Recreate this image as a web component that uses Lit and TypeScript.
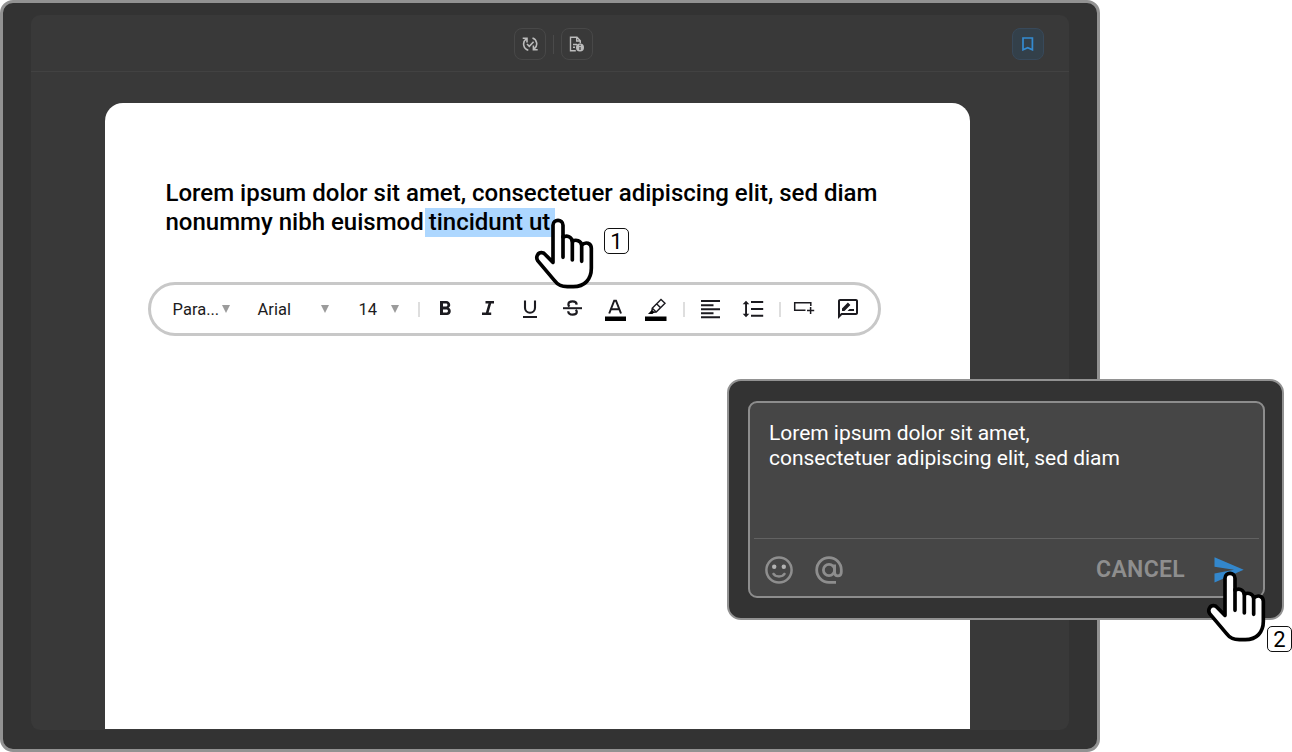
import { LitElement, html, css, svg } from "lit";
import { customElement, property } from "lit/decorators.js";

@customElement("pointer-hand")
class PointerHand extends LitElement {
  static styles = css`
    :host { display: block; width: 62px; height: 72px; }
    svg { display: block; overflow: visible; }
  `;
  render() {
    return html`<svg width="62" height="72" viewBox="42 54 186 216" fill="#fff" stroke="#000" stroke-width="11" stroke-linecap="round" stroke-linejoin="round">
      <path d="M99 187V76C99 56 129 56 129 76V112C140 104 155 110 157 124C168 117 183 122 185 135C197 124 214 129 214 145V205C214 238 194 260 160 260H142C122 260 113 254 103 241L53 182C46 170 54 157 66 158C70 158 74 161 77 165Z"/>
      <path d="M129 110V172M157 122V180M185 133V184" fill="none"/>
    </svg>`;
  }
}

@customElement("step-badge")
class StepBadge extends LitElement {
  @property() label = "";
  static styles = css`
    :host { display: block; }
    .box { box-sizing: border-box; width: 25px; height: 26px; border: 1.4px solid #111; border-radius: 5px; background: #fff; color: #000;
      font: 400 22px/25px Roboto, sans-serif; text-align: center; }
  `;
  render() { return html`<div class="box">${this.label}</div>`; }
}

const glyphs = {
  bold: svg`<path d="M15.6 10.79c.97-.67 1.65-1.77 1.65-2.79 0-2.26-1.75-4-4-4H7v14h7.04c2.09 0 3.71-1.7 3.71-3.79 0-1.52-.86-2.82-2.15-3.42zM10 6.5h3c.83 0 1.5.67 1.5 1.5s-.67 1.5-1.5 1.5h-3v-3zm3.5 9H10v-3h3.5c.83 0 1.5.67 1.5 1.5s-.67 1.5-1.5 1.5z"/>`,
  italic: svg`<path d="M9.5 4v2.4h3L9.9 15.6H6V18h9.2v-2.4h-2.6l2.6-9.2H18V4z"/>`,
  underline: svg`<path d="M7 3.500v7.300a5 5 0 0 0 10 0V3.500" fill="none" stroke="currentColor" stroke-width="2.100"/><path d="M5 19h14v2H5z"/>`,
  strike: svg`<path d="M3 10.200h19v2H3z"/><path d="M16.700 7.600C16.500 5.300 14.900 4.400 12.600 4.400c-2.600 0-4.200 1.300-4.200 3 0 1 .4 1.600 1.100 2.200M15.600 12.800c.8.6 1.200 1.200 1.200 2 0 1.700-1.700 2.800-4.100 2.800-2.500 0-4.400-1.200-4.500-3.400" fill="none" stroke="currentColor" stroke-width="2.200"/>`,
  color: svg`<path d="M6.200 16.500 11.200 3.700h1.800l5 12.800M8 12.200h8.200" fill="none" stroke="currentColor" stroke-width="2"/><path d="M2 19.500h21V24H2z" fill="#000"/>`,
  marker: svg`<path d="M8.200 11.200 17 2.400l4 3.800-8.800 8.800-3.400.3-1 .9H5.600l2.300-2.300zM8.300 11.200l3.900 3.800M12.800 7l3.800 3.700" fill="none" stroke="currentColor" stroke-width="1.400"/><path d="M5 16.800 8 13l2.400 2.300-1.700 1.500zM1 19.500h21.500V24H1z" fill="#000"/>`,
  align: svg`<path d="M3 3h19v2H3zM3 7.200h12.500v2H3zM3 11.200h19v2H3zM3 15.300h12.500v2H3zM3 19.200h19v2H3z"/>`,
  spacing: svg`<path d="M10 4h12.200v2H10zM10 11h12.200v2H10zM10 17.800h12.200v2H10zM4.100 6h1.900v12H4.100z"/><path d="M5 3.700 8.300 7.300H1.700zM5 20.300l3.300-3.600H1.700z"/>`,
  insert: svg`<path d="M18.800 9V5.700H2.700v7.600h10.800M18.600 10v7M15 13.500h7.200" fill="none" stroke="currentColor" stroke-width="1.500"/>`,
  review: svg`<path d="M20 2H4c-1.100 0-1.990.9-1.990 2L2 22l4-4h14c1.100 0 2-.9 2-2V4c0-1.100-.9-2-2-2zm0 14H5.170L4 17.170V4h16v12z"/><path d="M6 14v-2.500l5.900-5.900 2.500 2.500L8.500 14zM11.500 14l2-2H18v2z"/>`,
};
const icon = (g: unknown) => html`<svg class="icon" width="24" height="24" viewBox="0 0 24 24" fill="currentColor">${g}</svg>`;

@customElement("format-toolbar")
class FormatToolbar extends LitElement {
  static styles = css`
    :host { display: block; }
    .bar { box-sizing: border-box; width: 733px; height: 54px; border: 3px solid #c8c8c8; border-radius: 27px; background: #fff; padding-left: 21px;
      display: grid; align-items: center; color: #1c1b20;
      grid-template-columns: 50px 35px 64px 37px 33px 27px 15px 43px 42px 42px 43px 41px 39px 15px 43px 38px 13px 44px 24px;
      font: 400 16.500px/20px Roboto, "Liberation Sans", sans-serif; }
    .text { padding: 1px 0 0 .6px; white-space: nowrap; }
    .arrow { width: 0; height: 0; border: 4px solid transparent; border-top: 8px solid #9b9b9b; border-bottom: 0; }
    .sep { width: 1.500px; height: 15px; background: #dedede; }
    .icon { display: block; overflow: visible; }
  `;
  render() {
    const arrow = html`<span class="arrow"></span>`;
    const sep = html`<span class="sep"></span>`;
    return html`<div class="bar">
      <span class="text">Para...</span>${arrow}
      <span class="text">Arial</span>${arrow}
      <span class="text">14</span>${arrow}${sep}
      ${[glyphs.bold, glyphs.italic, glyphs.underline, glyphs.strike, glyphs.color, glyphs.marker].map(icon)}
      ${sep}${icon(glyphs.align)}${icon(glyphs.spacing)}${sep}${icon(glyphs.insert)}${icon(glyphs.review)}
    </div>`;
  }
}

@customElement("comment-popup")
class CommentPopup extends LitElement {
  static styles = css`
    :host { display: block; }
    .shell { box-sizing: border-box; width: 557px; height: 240.500px; border: 2px solid #929292; border-radius: 14px; background: #333; padding: 20px 17px 19px 19px; }
    .box { box-sizing: border-box; height: 197px; border: 2.500px solid #8d8d8d; border-radius: 9px; background: #464646; display: flex; flex-direction: column; padding: 0 4px; }
    .message { flex: 1; padding: 18px 0 0 15px; color: #fff; font: 400 21px/25px Roboto, sans-serif; letter-spacing: -.02px; white-space: nowrap; }
    .actions { height: 58px; box-sizing: border-box; border-top: 1px solid #626262; display: flex; align-items: center; padding: 5px 15px 0 10px; color: #8e8e8e; }
    .mention { margin-left: 20px; }
    .cancel { margin-left: auto; font: 600 23px/28px Roboto, sans-serif; letter-spacing: .3px; }
    .send { margin-left: 29px; }
    svg { display: block; }
  `;
  render() {
    return html`<div class="shell"><div class="box">
      <div class="message">Lorem ipsum dolor sit amet,<br>consectetuer adipiscing elit, sed diam</div>
      <div class="actions">
        <svg width="30" height="30" viewBox="0 0 30 30"><circle cx="15" cy="15" r="12.600" fill="none" stroke="currentColor" stroke-width="2.500"/><circle cx="10.200" cy="11.800" r="2.200" fill="#b2b2b2"/><circle cx="19.800" cy="11.800" r="2.200" fill="#b2b2b2"/><path d="M8.900 18.200c2.700 4.400 9.500 4.400 12.200 0" fill="none" stroke="currentColor" stroke-width="2.300"/></svg>
        <svg class="mention" width="30" height="30" viewBox="0 0 30 30" fill="none" stroke="currentColor" stroke-width="2.800"><circle cx="15" cy="15" r="5.600"/><path d="M20.600 9.500v7.800c0 2.300 1.300 3.600 3.200 3.600 2 0 3.500-1.500 3.500-3.900v-2A12.300 12.300 0 1 0 15 27.300h7"/></svg>
        <span class="cancel">CANCEL</span>
        <svg class="send" width="30" height="26" viewBox="0 0 30 26"><path d="M.5.300 29.700 12.700.5 25.600V16.500L20 12.700.5 9.700z" fill="#3387cc"/></svg>
      </div>
    </div></div>`;
  }
}

@customElement("app-root")
class AppRoot extends LitElement {
  static styles = css`
    :host { display: block; width: 1292px; height: 752px; position: relative; overflow: hidden; background: #fff; font-family: Roboto, sans-serif; }
    .frame { box-sizing: border-box; width: 1100px; height: 752px; border: 3px solid #929292; border-radius: 13px; background: #333; padding: 12px 28px 18px; }
    .app { height: 715px; background: #393939; border-radius: 9px; display: flex; flex-direction: column; }
    .head { height: 57px; box-sizing: border-box; border-bottom: 1px solid #424242; display: grid; grid-template-columns: 483px 32px 15px 32px 418.500px 32px; padding-top: 13px; }
    .sep { width: 1px; height: 19px; margin: 7px 0 0 7px; background: #4a4a4a; }
    .btn { box-sizing: border-box; width: 32px; height: 32px; border: 1px solid #484848; border-radius: 8px; display: grid; place-items: center; color: #bcbcbc; }
    .marked { background: #33404a; border-color: #38495a; color: #348ad0; }
    .page { margin: 31px 99px 0 73.500px; height: 626px; box-sizing: border-box; border-radius: 18px 18px 0 0; background: #fff; padding: 76px 0 0 43.500px; }
    .copy { margin: 0 0 45px 17.500px; color: #000; font: 500 24px/29px Roboto, sans-serif; white-space: nowrap; }
    .mark { background: #add7ff; display: inline-block; height: 29px; margin-left: -5px; padding: 0 5px 0 4px; }
    .popup, .hand, .badge { position: absolute; }
    .popup { left: 727px; top: 379px; }
    .hand-one { left: 534px; top: 218px; }
    .hand-two { left: 1205.500px; top: 571.300px; }
    .badge-one { left: 604px; top: 228.400px; }
    .badge-two { left: 1267px; top: 626px; }
  `;
  render() {
    return html`
      <div class="frame"><div class="app">
        <div class="head">
          <span></span>
          <span class="btn"><svg width="16" height="16" viewBox="0 0 16 16" fill="none" stroke="currentColor" stroke-width="1.600"><path d="M6.300 14.200A6.300 6.300 0 0 1 4 3.200M.7 2.200h4.300v4.300M10.500 1.900a6.300 6.300 0 0 1 1.800 10.900M15.700 13.800h-4.300V9.500M5 8l2.300 2.300 4.300-4.500"/></svg></span>
          <span class="sep"></span>
          <span class="btn"><svg width="16" height="16" viewBox="0 0 16 16"><path d="M6.800 14.700H1.500V1.300h6.500l3.300 3.400v2.500M7.700 1.500v3.500h3.500M4 8.500h4M4 11.300h2" fill="none" stroke="currentColor" stroke-width="1.400"/><circle cx="11" cy="11.500" r="4" fill="currentColor"/><path d="M11 8.800v1.200M11 10.900v3" stroke="#393939" stroke-width="1.200"/></svg></span>
          <span></span>
          <span class="btn marked"><svg width="12" height="14" viewBox="0 0 12 14"><path d="M1 1h9.400v11.800L5.700 10.700 1 12.800z" fill="none" stroke="currentColor" stroke-width="1.700"/></svg></span>
        </div>
        <div class="page">
          <div class="copy">Lorem ipsum dolor sit amet, consectetuer adipiscing elit, sed diam<br>nonummy nibh euismod <span class="mark">tincidunt ut</span></div>
          <format-toolbar></format-toolbar>
        </div>
      </div></div>
      <comment-popup class="popup"></comment-popup>
      <pointer-hand class="hand hand-one"></pointer-hand>
      <pointer-hand class="hand hand-two"></pointer-hand>
      <step-badge class="badge badge-one" label="1"></step-badge>
      <step-badge class="badge badge-two" label="2"></step-badge>`;
  }
}
